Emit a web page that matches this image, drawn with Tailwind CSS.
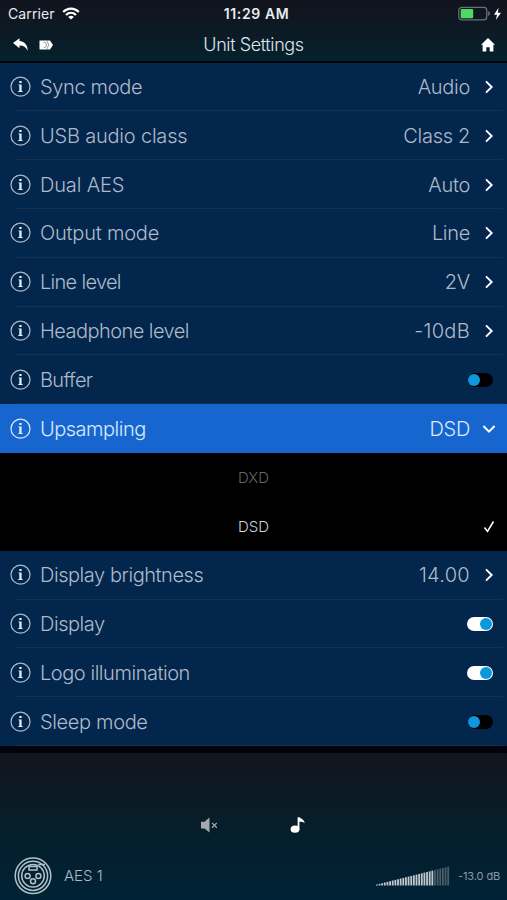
<!DOCTYPE html>
<html lang="en">
<head>
    <meta charset="UTF-8">
    <meta name="viewport" content="width=device-width, initial-scale=1.0">
    <title>Unit Settings</title>
    <script src="https://cdn.jsdelivr.net/npm/@tailwindcss/browser@4"></script>
</head>
<body class="w-[507px] h-[900px] overflow-hidden bg-[#01040c] font-['Inter',sans-serif] text-[#aebac8] flex flex-col">
    <!-- icons -->
    <svg class="hidden">
        <symbol id="info" viewBox="0 0 22 22">
            <circle cx="10.5" cy="10.7" r="9.5" fill="none" stroke="currentColor" stroke-width="1.2"/>
            <path d="M9.3 5h2.3v2H9.3zM8.4 8.4h3.2v6.6h1v.9H8.3V15h1V9.3h-.9z" fill="#e4ecf5"/>
        </symbol>
        <symbol id="chevron" viewBox="0 0 16 16">
            <path d="M5 2.4 10.7 8 5 13.6" fill="none" stroke="#fff" stroke-width="1.9"/>
        </symbol>
    </svg>

    <header class="h-[61px] shrink-0 bg-linear-to-b from-[#11131d] to-[#03212c]">
        <div class="h-[27px] mb-px flex items-center relative pl-2 text-[#e9ecef]">
            <span class="w-[48px] text-[14px] tracking-[0.1px]">Carrier</span>
            <svg class="w-[18px] h-[13px] ml-[6px]" viewBox="0 0 18 13" fill="none" stroke="#fff" stroke-width="2.3">
                <path d="M1.2 5C5.8.6 12.2.6 16.8 5M4 8c3-2.8 7-2.8 10 0"/>
                <path d="M9 12.6 6.2 9.9c1.6-1.4 4-1.4 5.6 0z" fill="#fff" stroke="none"/>
            </svg>
            <span class="absolute left-0 w-[513px] text-center text-[14px] font-semibold tracking-[0.6px]">11:29 AM</span>
            <svg class="w-[44px] h-[16px] ml-auto mr-[5px]" viewBox="0 0 44 16">
                <rect x=".8" y="1.3" width="28" height="12.5" rx="3" fill="none" stroke="#667078" stroke-width="1.3"/>
                <rect x="2.7" y="3" width="12.5" height="9.2" rx="1" fill="#4cd964"/>
                <path d="M30.2 5.1c2.3.8 2.3 4.2 0 5z" fill="#667078"/>
                <path d="M40.5 1.8 36 8.8h3L37.8 14 43 6.8h-3.2z" fill="#fff"/>
            </svg>
        </div>
        <div class="h-[33px] flex items-center relative px-3">
            <svg class="w-[17px] h-[14px]" viewBox="0 0 17 14" fill="#fff">
                <path d="M1 5.1 7.5.2v2.7c5.2.4 8.2 4 8.2 10.1C14.2 9.3 11.5 7.6 7.5 7.6v2.7z"/>
            </svg>
            <svg class="w-[14px] h-[10px] ml-[10px]" viewBox="0 0 14 10">
                <path d="M.5.5H11L14 5l-3 4.5H.5z" fill="#fff"/>
                <path d="M4.8 2.5h1.4L7.8 5 6.2 7.5H4.8M7.8.7 9.8 5 7.8 9.3" fill="none" stroke="#41616b" stroke-width=".6"/>
            </svg>
            <h1 class="absolute left-0 w-[507px] text-center text-[18px] font-light tracking-[-0.4px] text-[#dfe6ec]">Unit Settings</h1>
            <svg class="w-[14px] h-[14px] ml-auto" viewBox="0 0 14 14" fill="#fff">
                <path d="M7 0 14 6.7h-1.6v6.8H8.7V9.2H5.3v4.3H1.6V6.7H0z"/>
            </svg>
        </div>
    </header>

    <main id="settings" class="mt-[1.5px] h-[683.6px] shrink-0 grid grid-rows-14 bg-[#03264d] text-[20px] font-light"></main>

    <footer class="mt-[7px] flex-1 bg-linear-to-b from-[#11151e] via-[#061e2a] to-[#002236] flex flex-col">
        <div class="h-[98px] pt-[64px] pl-[200px] flex">
            <svg class="w-[18px] h-[16px]" viewBox="0 0 18 16">
                <path d="M1 4.8h3.5l5-4.3v15l-5-4H1z" fill="#a3a8af"/>
                <path d="m12 5.9 4.8 4.8m0-4.8L12 10.7" stroke="#a3a8af" stroke-width="1.3"/>
            </svg>
            <svg class="w-4 h-4 ml-[72px]" viewBox="0 0 16 16" fill="#fff">
                <ellipse cx="5" cy="12.2" rx="4.4" ry="3.6"/>
                <path d="M7.6.3h1.9c1.4 1.5 4.6 1.9 5.2 5.9-1.5-1.4-3.2-1.6-5.3-1.5v7.7H7.6z"/>
            </svg>
        </div>
        <div class="h-[49px] flex items-center pl-[13.5px] pr-[7px]">
            <svg class="w-[38px] h-[38px]" viewBox="0 0 38 38" fill="none" stroke="#b2c0c9" stroke-width="1.5">
                <circle cx="19" cy="18.8" r="17.8"/>
                <circle cx="19" cy="18.8" r="14.6"/>
                <circle cx="19" cy="18.8" r="11.3"/>
                <circle cx="13.6" cy="19" r="2.5"/>
                <circle cx="24.4" cy="19" r="2.5"/>
                <circle cx="19" cy="24.2" r="2.5"/>
                <path d="M15 9.5v3.5h8V9.5zM24.5 7.5h6.5"/>
            </svg>
            <span class="ml-[12.5px] mt-px text-[15px] font-light">AES 1</span>
            <svg id="volume" class="w-[74px] h-5 ml-auto" viewBox="0 0 74 20"></svg>
            <span class="ml-[8px] mt-px w-[42px] whitespace-nowrap text-[11px] tracking-[-0.1px] text-[#8b9aa4]">-13.0 dB</span>
        </div>
    </footer>

    <script>
        // label, value, label tracking, kind
        const rows = [
            ['Sync mode', 'Audio', 'tracking-[-0.35px]'],
            ['USB audio class', 'Class 2', 'tracking-[-0.2px]'],
            ['Dual AES', 'Auto', 'tracking-[-0.15px]'],
            ['Output mode', 'Line', 'tracking-[-0.2px]'],
            ['Line level', '2V', 'tracking-[-0.7px]'],
            ['Headphone level', '-10dB', 'tracking-[-0.55px]'],
            ['Buffer', false, 'tracking-[-0.65px]'],
            ['Upsampling', 'DSD', 'tracking-[-0.5px]', 'open'],
            ['DXD', null, '', 'option'],
            ['DSD', null, '', 'selected'],
            ['Display brightness', '14.00', 'tracking-[-0.45px]'],
            ['Display', true, 'tracking-[-0.45px]'],
            ['Logo illumination', true, 'tracking-[-0.45px]'],
            ['Sleep mode', false, 'tracking-[-0.35px]'],
        ];

        function control(value, open) {
            if (value === true) return '<span class="w-[26px] h-[14px] rounded-full bg-white p-px flex justify-end mr-[14.5px]"><i class="w-3 h-3 rounded-full bg-[#0b98dc]"></i></span>';
            if (value === false) return '<span class="w-[25px] h-[14px] rounded-full bg-black p-px pl-0 flex mr-[14.5px]"><i class="w-3 h-3 rounded-full bg-[#0b98dc]"></i></span>';
            const tracking = /\d{2}/.test(value) ? 'tracking-[0.3px]' : 'tracking-[-0.3px]';
            return `<span class="${tracking}">${value}</span><svg class="w-4 h-4 ml-[10.5px] mr-[10.5px] ${open ? 'rotate-90' : ''}"><use href="#chevron"/></svg>`;
        }

        document.getElementById('settings').innerHTML = rows.map(([name, value, tracking, kind]) => {
            if (kind === 'option' || kind === 'selected') {
                const color = kind === 'option' ? 'text-[#666]' : 'text-[#d5d5d5]';
                const check = '<svg class="absolute right-3 w-3 h-[14px]" viewBox="0 0 12 14"><path d="M1.5 7.5l3 4 6-10" fill="none" stroke="#fff" stroke-width="1.5"/></svg>';
                return `<div class="relative flex items-center justify-center pt-[2px] bg-black text-[15px] ${color}">${name}${kind === 'selected' ? check : ''}</div>`;
            }
            const style = kind === 'open' ? 'bg-[#1766d0] text-[#dbe9fb]' : '';
            const line = kind === 'open' ? '' : '<hr class="absolute left-4 right-1 bottom-0 border-[#1c2f46]">';
            return `<div class="relative flex items-center pl-[10px] ${style}"><svg class="w-[22px] h-[22px] mr-2"><use href="#info"/></svg><span class="mr-auto ${tracking}">${name}</span>${control(value, kind === 'open')}${line}</div>`;
        }).join('');

        // volume meter, the last bars are dimmed
        let bars = '';
        for (let i = 0; i < 28; i++) {
            const h = 1 + i * 0.66;
            bars += `<rect x="${i * 2.64}" y="${19.5 - h}" width="1.8" height="${h}" fill="${i < 22 ? '#c0c9ce' : '#4a5d68'}"/>`;
        }
        document.getElementById('volume').innerHTML = bars;
    </script>
</body>
</html>
